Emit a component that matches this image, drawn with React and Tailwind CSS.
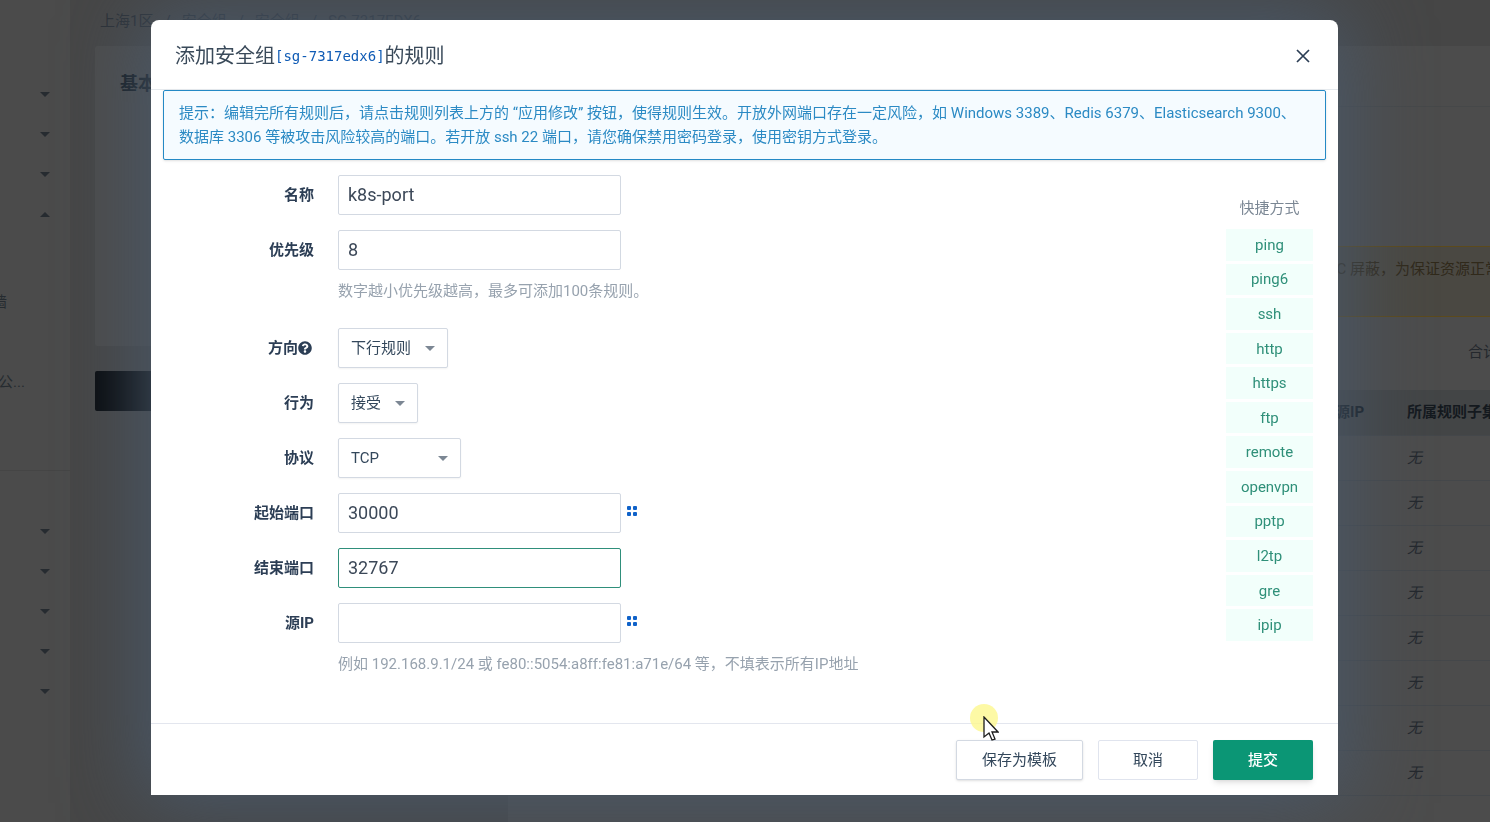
import { useState } from 'react';
import { FaQuestionCircle } from 'react-icons/fa';

const SHORTCUTS = ['ping', 'ping6', 'ssh', 'http', 'https', 'ftp', 'remote', 'openvpn', 'pptp', 'l2tp', 'gre', 'ipip'];

function Caret({ className, up }) {
  return (
    <svg width="10" height="5" viewBox="0 0 10 5" className={className} aria-hidden="true">
      <path d={up ? 'M0 5h10L5 0z' : 'M0 0h10L5 5z'} fill="currentColor" />
    </svg>
  );
}

function Dots() {
  return (
    <svg width="10" height="10" viewBox="0 0 10 10" fill="#0f62c9" aria-hidden="true">
      <rect width="4" height="4" rx="1" />
      <rect x="6" width="4" height="4" rx="1" />
      <rect y="6" width="4" height="4" rx="1" />
      <rect x="6" y="6" width="4" height="4" rx="1" />
    </svg>
  );
}

function Row({ id, label, icon, hint, children }) {
  return (
    <div className="flex gap-6">
      <label htmlFor={id} className="flex h-10 w-[163px] shrink-0 items-center justify-end font-bold text-[#2c3e55]">
        {label}
        {icon}
      </label>
      <div>
        <div className="flex h-10 items-center gap-1.5">{children}</div>
        {hint && <p className="pt-[9px] text-[#97a2ae]">{hint}</p>}
      </div>
    </div>
  );
}

function TextField({ id, value, onChange, active }) {
  return (
    <input
      id={id}
      type="text"
      value={value}
      onChange={(e) => onChange(id, e.target.value)}
      className={
        active
          ? 'h-10 w-[283px] rounded-xs border border-[#2f8f7b] bg-white px-[9px] pb-0.5 text-lg text-[#3c4858] outline-none'
          : 'h-10 w-[283px] rounded-xs border border-[#d3d9e2] bg-white px-[9px] pb-0.5 text-lg text-[#3c4858] outline-none'
      }
    />
  );
}

function SelectField({ id, options, width }) {
  return (
    <div className={`relative ${width}`}>
      <select
        id={id}
        className="h-10 w-full appearance-none rounded-xs border border-[#d3d9e2] bg-white pl-3 text-[#33475b] shadow-xs outline-none"
      >
        {options.map((o) => (
          <option key={o}>{o}</option>
        ))}
      </select>
      <Caret className="pointer-events-none absolute top-[18px] right-[13px] text-[#7c8794]" />
    </div>
  );
}

function PortMenu({ label }) {
  return (
    <button type="button" aria-label={label} className="pb-1">
      <Dots />
    </button>
  );
}

function Sidebar() {
  return (
    <aside className="flex w-[70px] shrink-0 flex-col bg-[#4b4b4b] text-[#262b30]">
      <div className="flex h-[471px] flex-col border-b border-[#454545] pt-[74px]">
        {[false, false, false, true].map((up, i) => (
          <div key={i} className="flex h-10 items-center justify-end pr-5">
            <Caret up={up} />
          </div>
        ))}
        <div className="flex h-20 items-end">
          <span className="-ml-2">墙</span>
        </div>
        <div className="flex h-20 items-end">
          <span className="-ml-0.5">公...</span>
        </div>
      </div>
      <div className="pt-10">
        {[0, 1, 2, 3, 4].map((i) => (
          <div key={i} className="flex h-10 items-center justify-end pr-5">
            <Caret />
          </div>
        ))}
      </div>
    </aside>
  );
}

function Backdrop() {
  return (
    <div className="flex h-screen overflow-hidden bg-[#464646]" aria-hidden="true">
      <Sidebar />
      <div className="min-w-0 flex-1 pl-[25px]">
        <div className="flex h-[46px] items-center gap-[11px] pb-1 pl-[5px] text-[#2b3036]">
          <span>上海1区</span>
          <span>/</span>
          <span>安全组</span>
          <span>/</span>
          <span>安全组</span>
          <span>/</span>
          <span>SG-7317EDX6</span>
        </div>
        <div className="flex gap-[15px]">
          <div className="w-[398px] shrink-0">
            <div className="h-[300px] rounded-xs bg-[#4c4c4c] px-[25px] pt-6 text-lg font-bold text-[#11181e]">基本信息</div>
            <div className="mt-[25px] h-10 rounded-xs bg-[#080b0e]" />
          </div>
          <div className="h-screen min-w-0 flex-1 bg-[#4c4c4c]">
            <div className="h-[61px] border-b border-[#464849]" />
            <div className="mt-[139px] flex h-[71px] justify-end border-y border-[#5c4a1c] bg-[#4a4842] pt-2.5 whitespace-nowrap text-[#30291a]">
              <span className="-mr-2.5">VPC 屏蔽，为保证资源正常</span>
            </div>
            <div className="flex h-[73px] items-center justify-end pb-1">
              <span className="-mr-2 whitespace-nowrap text-[#24282d]">合计</span>
            </div>
            <table className="w-full table-fixed text-left whitespace-nowrap">
              <thead>
                <tr className="h-[45px] bg-[#434546] text-[#14191e]">
                  <th />
                  <th className="w-[86px] pl-[14px] text-[#11181e]">源IP</th>
                  <th className="w-[83px] overflow-hidden">所属规则子集</th>
                </tr>
              </thead>
              <tbody>
                {[0, 1, 2, 3, 4, 5, 6, 7].map((i) => (
                  <tr key={i} className="h-[45px] border-t border-[#44474a]">
                    <td />
                    <td />
                    <td className="text-[#23272c] italic">无</td>
                  </tr>
                ))}
              </tbody>
            </table>
            <div className="border-t border-[#44474a]" />
          </div>
        </div>
      </div>
    </div>
  );
}

function Pointer() {
  return (
    <div className="pointer-events-none absolute bottom-[63px] left-[819px]">
      <div className="size-7 rounded-full bg-[#fdf78f]/80" />
      <svg width="16" height="26" viewBox="0 0 16 26" className="absolute top-3 left-[13px]">
        <path d="M1 1v20l5-4 3 7 3-1-3-7h6z" fill="#fff" stroke="#1c1c1c" strokeWidth="1.3" />
      </svg>
    </div>
  );
}

export default function App() {
  const [form, setForm] = useState({ name: 'k8s-port', priority: '8', startPort: '30000', endPort: '32767', source: '' });
  const update = (key, value) => setForm((prev) => ({ ...prev, [key]: value }));

  return (
    <div className="font-[Roboto,'Noto_Sans_CJK_SC',sans-serif] text-[15px] leading-6">
      <Backdrop />

      <div className="fixed inset-0 overflow-hidden pt-5 pr-[152px] pl-[151px]">
        <div
          role="dialog"
          aria-labelledby="dialog-title"
          className="relative rounded-t-lg bg-white shadow-[0_0_80px_8px_#4a596a]"
        >
          <header className="flex h-[70px] items-center justify-between border-b border-[#e6eaee] px-6 pt-0.5">
            <h1 id="dialog-title" className="flex items-center text-xl text-[#3a4a5a]">
              添加安全组
              <code className="font-['DejaVu_Sans_Mono',monospace] text-sm text-[#0f5bb5]">[sg-7317edx6]</code>
              的规则
            </h1>
            <button type="button" aria-label="关闭" className="p-1 text-[#2c3e55]">
              <svg width="14" height="14" viewBox="0 0 14 14" stroke="currentColor" strokeWidth="1.7">
                <path d="M1 1l12 12M13 1L1 13" />
              </svg>
            </button>
          </header>

          <div className="mx-3 rounded-xs border border-[#2489c5] bg-[#f5fbff] py-2.5 pr-5 pl-[15px] text-[#2b8ac4] shadow-sm">
            提示：编辑完所有规则后，请点击规则列表上方的 “应用修改” 按钮，使得规则生效。开放外网端口存在一定风险，如 Windows 3389、Redis 6379、Elasticsearch 9300、数据库 3306 等被攻击风险较高的端口。若开放 ssh 22 端口，请您确保禁用密码登录，使用密钥方式登录。
          </div>

          <div className="flex justify-between pt-[15px] pr-[25px] pb-[47px]">
            <form id="rule-form" className="flex flex-col gap-[15px]" onSubmit={(e) => e.preventDefault()}>
              <Row id="name" label="名称">
                <TextField id="name" value={form.name} onChange={update} />
              </Row>
              <div className="pb-2.5">
                <Row id="priority" label="优先级" hint="数字越小优先级越高，最多可添加100条规则。">
                  <TextField id="priority" value={form.priority} onChange={update} />
                </Row>
              </div>
              <Row id="direction" label="方向" icon={<FaQuestionCircle size={14} className="mr-0.5" />}>
                <SelectField id="direction" options={['下行规则', '上行规则']} width="w-[110px]" />
              </Row>
              <Row id="action" label="行为">
                <SelectField id="action" options={['接受', '拒绝']} width="w-20" />
              </Row>
              <Row id="protocol" label="协议">
                <SelectField id="protocol" options={['TCP', 'UDP', 'ICMP']} width="w-[123px]" />
              </Row>
              <Row id="startPort" label="起始端口">
                <TextField id="startPort" value={form.startPort} onChange={update} />
                <PortMenu label="选择端口" />
              </Row>
              <Row id="endPort" label="结束端口">
                <TextField id="endPort" value={form.endPort} onChange={update} active />
              </Row>
              <Row id="source" label="源IP" hint="例如 192.168.9.1/24 或 fe80::5054:a8ff:fe81:a71e/64 等，不填表示所有IP地址">
                <TextField id="source" value={form.source} onChange={update} />
                <PortMenu label="选择源IP" />
              </Row>
            </form>

            <div className="w-[87px] pt-[21px] text-center">
              <p className="text-[#7b8794]">快捷方式</p>
              <div className="mt-[9px] grid h-[412px] gap-[3px]">
                {SHORTCUTS.map((name) => (
                  <button key={name} type="button" className="bg-[#f2fffb] text-[#2f9079]">
                    {name}
                  </button>
                ))}
              </div>
            </div>
          </div>

          <footer className="flex justify-end gap-[15px] border-t border-[#e3e6ee] px-[25px] pt-4 pb-[15px]">
            <button type="button" className="h-10 w-[127px] rounded-xs border border-[#d3d9e2] bg-white text-[#33475b] shadow-sm">
              保存为模板
            </button>
            <button type="button" className="h-10 w-[100px] rounded-xs border border-[#e0e4ee] bg-white text-[#33475b]">
              取消
            </button>
            <button
              type="submit"
              form="rule-form"
              className="h-10 w-[100px] rounded-xs bg-[#0b9675] font-medium text-white shadow-md"
            >
              提交
            </button>
          </footer>
          <Pointer />
        </div>
      </div>
    </div>
  );
}
